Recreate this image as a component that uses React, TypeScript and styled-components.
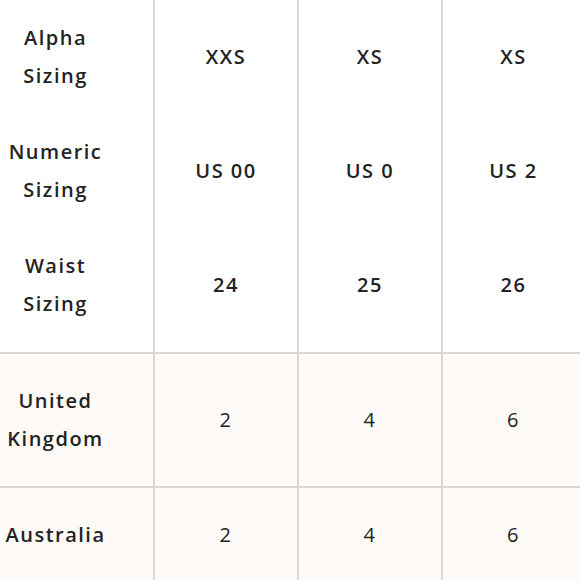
import React from 'react'
import styled, { createGlobalStyle } from 'styled-components'

const GlobalStyle = createGlobalStyle`
  html, body {
    margin: 0;
    padding: 0;
    background: #ffffff;
  }
  body {
    font-family: "Open Sans", "Liberation Sans", sans-serif;
    color: #222222;
  }
`

const Wrapper = styled.div`
  width: 580px;
  height: 580px;
  overflow: hidden;
`

const Table = styled.table`
  width: 584px;
  border-collapse: collapse;
  table-layout: fixed;
  font-size: 20px;
  letter-spacing: 1.5px;
  line-height: 38px;
`

const Head = styled.thead`
  background: #ffffff;
`

const Body = styled.tbody`
  background: #fdfaf8;
  tr {
    border-top: 2px solid #dcd8d4;
  }
`

const Cell = styled.td<{ $first?: boolean; $bold?: boolean; $head?: boolean; $last?: boolean }>`
  text-align: center;
  vertical-align: middle;
  padding: ${p => (p.$head ? `19px 0 ${p.$last ? 29 : 19}px` : '28px 0')};
  padding-right: ${p => (p.$first ? '42px' : '0')};
  font-weight: ${p => (p.$bold ? 600 : 400)};
  border-left: ${p => (p.$first ? 'none' : '2px solid #dcd8d4')};
  color: #232323;
`

type Row = { label: string[]; values: string[] }

const headRows: Row[] = [
  { label: ['Alpha', 'Sizing'], values: ['XXS', 'XS', 'XS'] },
  { label: ['Numeric', 'Sizing'], values: ['US 00', 'US 0', 'US 2'] },
  { label: ['Waist', 'Sizing'], values: ['24', '25', '26'] },
]

const bodyRows: Row[] = [
  { label: ['United', 'Kingdom'], values: ['2', '4', '6'] },
  { label: ['Australia'], values: ['2', '4', '6'] },
]

const Label = ({ lines }: { lines: string[] }) => (
  <>
    {lines.map((l, i) => (
      <React.Fragment key={l}>
        {i > 0 && <br />}
        {l}
      </React.Fragment>
    ))}
  </>
)

export default function App() {
  return (
    <Wrapper>
      <GlobalStyle />
      <Table>
        <colgroup>
          <col style={{ width: 154 }} />
          <col style={{ width: 144 }} />
          <col style={{ width: 144 }} />
          <col style={{ width: 142 }} />
        </colgroup>
        <Head>
          {headRows.map((row, i) => (
            <tr key={row.label.join(' ')}>
              <Cell $first $bold $head $last={i === headRows.length - 1}>
                <Label lines={row.label} />
              </Cell>
              {row.values.map((v, j) => (
                <Cell key={j} $bold $head $last={i === headRows.length - 1}>
                  {v}
                </Cell>
              ))}
            </tr>
          ))}
        </Head>
        <Body>
          {bodyRows.map(row => (
            <tr key={row.label.join(' ')}>
              <Cell $first $bold>
                <Label lines={row.label} />
              </Cell>
              {row.values.map((v, j) => (
                <Cell key={j}>{v}</Cell>
              ))}
            </tr>
          ))}
        </Body>
      </Table>
    </Wrapper>
  )
}
